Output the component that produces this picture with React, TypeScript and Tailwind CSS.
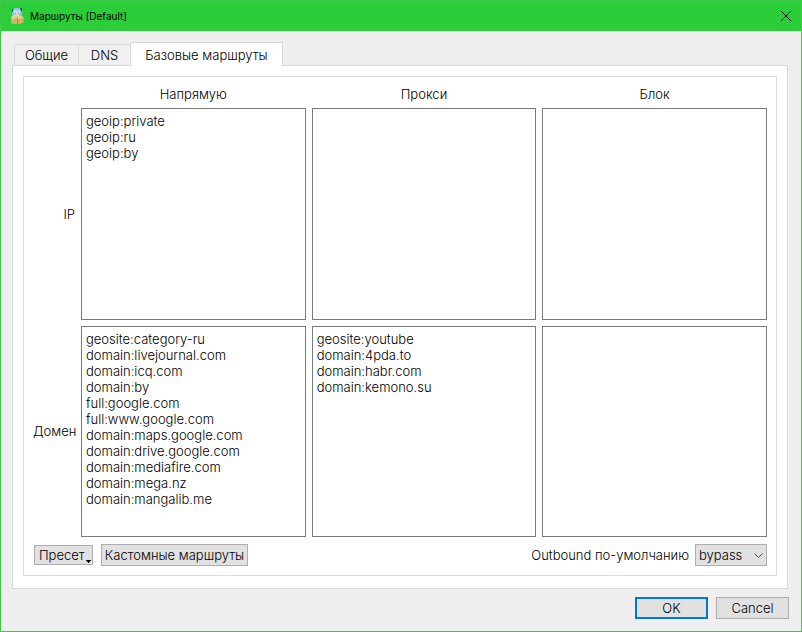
import { useState } from "react";

const columns = ["Напрямую", "Прокси", "Блок"];

const rows = [
  { label: "IP", values: ["geoip:private\ngeoip:ru\ngeoip:by", "", ""] },
  {
    label: "Домен",
    values: [
      "geosite:category-ru\ndomain:livejournal.com\ndomain:icq.com\ndomain:by\nfull:google.com\nfull:www.google.com\ndomain:maps.google.com\ndomain:drive.google.com\ndomain:mediafire.com\ndomain:mega.nz\ndomain:mangalib.me",
      "geosite:youtube\ndomain:4pda.to\ndomain:habr.com\ndomain:kemono.su",
      "",
    ],
  },
];

function AppIcon() {
  return (
    <svg width="16" height="18" viewBox="0 0 16 18" aria-hidden="true">
      <path d="M4 3 6 1h4l2 2 1 4-1 3H4L3 7z" fill="#8fcbe0" />
      <path d="M11 1h2v3h-1zM3 2h1v3H3z" fill="#2f5060" />
      <path d="M6 5h4v4H6z" fill="#dfe0e4" />
      <path d="M5 3h3v2H6v3H5zM9 3h2v4h-1z" fill="#b4dff0" />
      <path d="M6 6h1v1H6zM9 6h1v1H9z" fill="#4f7898" />
      <path d="M2 10l3-2h3l1 1h4l2 2-1 5-5 1H4l-2-1z" fill="#cdb56a" />
      <path d="M2 10l3-2h3l1 3-6 1zM9 9h4l1 2-5 1z" fill="#e6d08b" />
      <path d="M8 11h1v6H8z" fill="#a08b4b" />
    </svg>
  );
}

export default function App() {
  const [values, setValues] = useState(rows.map((r) => r.values));
  const edit = (r: number, c: number, text: string) =>
    setValues((all) => all.map((row, i) => row.map((v, j) => (i === r && j === c ? text : v))));

  return (
    <div className="flex min-h-screen flex-col border border-[#3fc94b] bg-[#efefef] font-['Inter',sans-serif] text-[13px] leading-4 font-light text-black">
      <header className="flex h-[30px] shrink-0 items-center bg-[#2bce38] pr-[7px] pl-2">
        <AppIcon />
        <h1 className="ml-[5px] flex-1 text-[10px] font-normal">Маршруты [Default]</h1>
        <button type="button" aria-label="Закрыть" className="flex size-4 items-center justify-center">
          <svg width="12" height="12" viewBox="0 0 12 12" stroke="#000" fill="none" aria-hidden="true">
            <path d="M1 1l10 10M11 1L1 11" />
          </svg>
        </button>
      </header>

      <main className="flex flex-1 flex-col pt-[11px] pr-[13px] pb-3 pl-[11px]">
        <div role="tablist" className="z-10 -mb-px flex items-end pl-0.5">
          <button type="button" role="tab" aria-selected="false" className="mb-px h-[21px] w-[65px] border border-b-0 border-[#d9d9d9] bg-[#f0f0f0]">
            Общие
          </button>
          <button type="button" role="tab" aria-selected="false" className="mb-px h-[21px] w-[51px] border-t border-[#d9d9d9] bg-[#f0f0f0]">
            DNS
          </button>
          <button type="button" role="tab" aria-selected="true" className="h-6 w-[153px] border border-b-0 border-[#d9d9d9] bg-white">
            Базовые маршруты
          </button>
        </div>

        <section role="tabpanel" className="flex flex-1 flex-col border border-[#d9d9d9] bg-white px-[10px] pt-[10px] pb-3">
          <div className="flex flex-1 flex-col border border-[#dcdcdc] p-[9px]">
            <div className="grid flex-1 grid-cols-[42px_1fr_1fr_1fr] grid-rows-[16px_1fr_1fr] gap-1.5">
              <span />
              {columns.map((c) => (
                <span key={c} className="text-center">{c}</span>
              ))}
              {rows.map((row, r) => (
                <div key={row.label} className="contents">
                  <span className="self-center text-right">{row.label}</span>
                  {columns.map((c, i) => (
                    <textarea
                      key={c}
                      aria-label={row.label + " " + c}
                      spellCheck={false}
                      value={values[r][i]}
                      onChange={(e) => edit(r, i, e.target.value)}
                      className="block min-h-48 w-full resize-none border border-[#7a7a7a] bg-white p-1 outline-none"
                    />
                  ))}
                </div>
              ))}
            </div>

            <div className="mt-[7px] flex items-center">
              <button type="button" className="relative ml-px flex h-5 w-[59px] items-center border border-[#adadad] bg-[#e1e1e1] pl-1">
                Пресет
                <svg width="5" height="3" viewBox="0 0 5 3" className="absolute right-px bottom-px" aria-hidden="true">
                  <path d="M0 0h5v1H4v1H3v1H2V2H1V1H0z" />
                </svg>
              </button>
              <button type="button" className="ml-2 h-[22px] w-[147px] border border-[#adadad] bg-[#e1e1e1] whitespace-nowrap">
                Кастомные маршруты
              </button>
              <label htmlFor="outbound" className="mr-1.5 ml-auto">Outbound по-умолчанию</label>
              <div className="relative">
                <select id="outbound" className="block h-[22px] w-[72px] appearance-none border border-[#adadad] bg-[#e1e1e1] pl-[3px]">
                  <option>bypass</option>
                  <option>proxy</option>
                  <option>block</option>
                </select>
                <svg width="9" height="6" viewBox="0 0 9 6" stroke="#555" fill="none" className="pointer-events-none absolute top-[9px] right-1" aria-hidden="true">
                  <path d="M.5.5l4 4 4-4" />
                </svg>
              </div>
            </div>
          </div>
        </section>

        <footer className="-mr-px mt-2 flex justify-end gap-2">
          <button type="button" className="h-[22px] w-[73px] border-2 border-[#0078d7] bg-[#e1e1e1]">OK</button>
          <button type="button" className="h-[22px] w-[73px] border border-[#adadad] bg-[#e1e1e1]">Cancel</button>
        </footer>
      </main>
    </div>
  );
}
